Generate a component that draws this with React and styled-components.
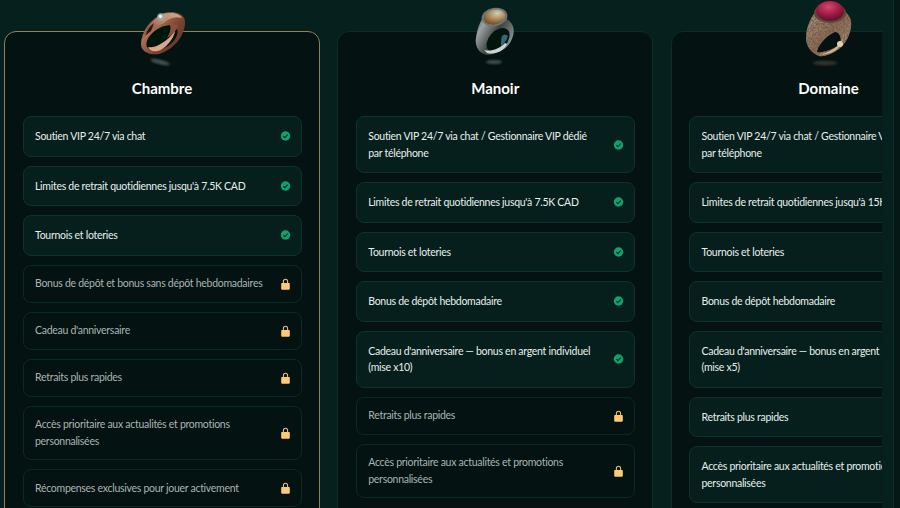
import styled, { createGlobalStyle } from "styled-components";

const GlobalStyle = createGlobalStyle`
	html, body {
		margin: 0;
		height: 100%;
		overflow: hidden;
		background: #06201d;
	}
	#root {
		height: 100%;
	}
`;

const Page = styled.div`
	display: flex;
	width: 900px;
	height: 508px;
	overflow: hidden;
	font-family: "Lato", "Liberation Sans", sans-serif;
`;
const Scroller = styled.div`
	display: flex;
	flex: 0 0 882px;
	gap: 17.25px;
	padding: 31px 0 0 4px;
	box-sizing: border-box;
	overflow: hidden;
`;
const Rail = styled.div`
	flex: 1;
	margin-left: 11px;
	background: #051816;
	border-left: 1px solid #0a2d28;
`;
const Card = styled.section`
	position: relative;
	flex: 0 0 316px;
	box-sizing: border-box;
	height: 560px;
	padding: 0 17.5px;
	background: #041211;
	border: 1px solid ${(p) => (p.$active ? "#8d8258" : "#0c2c27")};
	border-radius: 12px;
`;
const RingArt = styled.svg`
	position: absolute;
	top: -32px;
	left: 50%;
	width: 70px;
	height: 70px;
	margin-left: -35px;
`;
const Title = styled.h2`
	margin: 0;
	padding-top: 46px;
	height: 38px;
	font-size: 15px;
	line-height: 20px;
	font-weight: 700;
	color: #ffffff;
	text-align: center;
`;
const Rows = styled.div`
	display: flex;
	flex-direction: column;
	gap: 9px;
`;
const Row = styled.div`
	display: flex;
	align-items: center;
	justify-content: space-between;
	gap: 12px;
	padding: ${(p) => (p.$locked ? "9.75px" : "11px")} 9.7px
		${(p) => (p.$locked ? "9.75px" : "11px")} 11.5px;
	background: ${(p) => (p.$locked ? "transparent" : "#061f1c")};
	border: 1px solid ${(p) => (p.$locked ? "#0a2a25" : "#0c332d")};
	border-radius: 8px;
`;
const Label = styled.span`
	flex: 1;
	font-size: 10.5px;
	letter-spacing: -0.28px;
	line-height: 16.5px;
	color: ${(p) => (p.$locked ? "#a9b4b1" : "#e6efec")};
`;
const IconBox = styled.svg`
	flex: none;
	width: 11px;
	height: 12px;
`;

const CheckIcon = () => (
	<IconBox viewBox="0 0 11 12">
		<circle cx="5.5" cy="6" r="4.7" fill="#0ea36d" />
		<path d="M3.4 6.1l1.500 1.500 2.800-3" fill="none" stroke="#06231d" strokeWidth="1.2" />
	</IconBox>
);

const LockIcon = () => (
	<IconBox viewBox="0 0 11 12">
		<path d="M3.4 5.5V3.4a2.1 2.1 0 0 1 4.2 0v2.1" fill="none" stroke="#e9bd6c" strokeWidth="1.1" />
		<path d="M2.2 5h6.6c.6 0 1 .4 1 1v4.400c0 .9-.6 1.400-1.400 1.400H2.600c-.8 0-1.400-.5-1.400-1.400V6c0-.6.4-1 1-1z" fill="#fdca72" />
	</IconBox>
);

const CopperRing = () => (
	<RingArt viewBox="127 0 70 70">
		<defs>
			<linearGradient id="copper" x1="0" y1="0.1" x2="1" y2="0.9">
				<stop offset="0" stopColor="#5f3325" />
				<stop offset="0.3" stopColor="#a86f55" />
				<stop offset="0.6" stopColor="#7a4430" />
				<stop offset="1" stopColor="#5d3324" />
			</linearGradient>
			<linearGradient id="copperTop" x1="0" y1="1" x2="1" y2="0">
				<stop offset="0" stopColor="#6b3a2a" />
				<stop offset="0.5" stopColor="#b78268" />
				<stop offset="1" stopColor="#d9a98e" />
			</linearGradient>
			<filter id="soft1"><feGaussianBlur stdDeviation="0.4" /></filter>
			<filter id="soft2"><feGaussianBlur stdDeviation="1.2" /></filter>
		</defs>
		<g filter="url(#soft1)">
			<path d="M141 44c0-12 9-25 23-31 8-2 21-1 21 9 0 13-10 27-26 32-9 1.500-18-2-18-10z" fill="url(#copper)" />
			<path d="M145 36c2-10 9-18 19-22 7-2 15-1 18 4-7-2-13 0-18 5-7 3-14 7-19 13z" fill="url(#copperTop)" />
			<path d="M146 35c1-5 4-9 8-12l-3 8z" fill="#2e1710" />
			<ellipse cx="162" cy="38" rx="17.500" ry="10" transform="rotate(-34 162 38)" fill="#04120f" />
			<path d="M178 26c-2-2-6-3-9-2 3 3 1 9-2 14 5-3 10-8 11-12z" fill="#8a5038" />
			<path d="M148 47c6 2 19-5 27-16-1 8-10 18-17 20-6 1-9-1-10-4z" fill="#d9a78c" />
			<circle cx="161" cy="17" r="3.800" fill="#9aa89c" />
			<circle cx="160.500" cy="16.500" r="1.800" fill="#e6ebe2" />
		</g>
		<ellipse cx="160" cy="62" rx="10" ry="2.500" transform="rotate(14 160 62)" fill="#8b9a92" opacity="0.45" filter="url(#soft2)" />
	</RingArt>
);

const SilverRing = () => (
	<RingArt viewBox="461 0 70 70">
		<defs>
			<linearGradient id="silver" x1="0" y1="0" x2="1" y2="0.6">
				<stop offset="0" stopColor="#3f4645" />
				<stop offset="0.25" stopColor="#9aa2a0" />
				<stop offset="0.6" stopColor="#3c4342" />
				<stop offset="1" stopColor="#8d9492" />
			</linearGradient>
			<radialGradient id="topaz" cx="0.65" cy="0.3" r="0.75">
				<stop offset="0" stopColor="#cfcdb8" />
				<stop offset="0.5" stopColor="#b08c58" />
				<stop offset="1" stopColor="#6d4a2a" />
			</radialGradient>
		</defs>
		<g filter="url(#soft1)">
			<path d="M477 38c1-9 4-17 9-23l22 4c6 4 8 10 6 17-2 8-8 14-15 16-6 3-13 4-16 1-5-3-7-9-6-15z" fill="url(#silver)" />
			<ellipse cx="499" cy="40" rx="9" ry="14" transform="rotate(42 499 40)" fill="#031210" />
			<path d="M503 36c2-2 4-2 6 0-1 4-4 8-7 10 0-4 0-7 1-10z" fill="#33687a" />
			<path d="M485 50c7 2 15-1 21-7l2 1c-3 7-12 11-20 9z" fill="#cdd3d1" />
			<ellipse cx="495.500" cy="17" rx="13" ry="9.200" transform="rotate(-10 495.500 17)" fill="#6f7573" />
			<ellipse cx="495.500" cy="17" rx="10.800" ry="7.400" transform="rotate(-10 495.500 17)" fill="url(#topaz)" />
		</g>
		<ellipse cx="495" cy="62" rx="8" ry="2" fill="#8b9a92" opacity="0.45" filter="url(#soft2)" />
	</RingArt>
);

const RubyRing = () => (
	<RingArt viewBox="794 0 70 70">
		<defs>
			<linearGradient id="bronze" x1="0" y1="0" x2="1" y2="1">
				<stop offset="0" stopColor="#b39a80" />
				<stop offset="0.5" stopColor="#8c6c54" />
				<stop offset="1" stopColor="#b59a7d" />
			</linearGradient>
			<radialGradient id="ruby" cx="0.45" cy="0.3" r="0.7">
				<stop offset="0" stopColor="#d4476e" />
				<stop offset="0.55" stopColor="#a01c47" />
				<stop offset="1" stopColor="#5e0f29" />
			</radialGradient>
			<filter id="grain">
				<feTurbulence type="fractalNoise" baseFrequency="0.55" numOctaves="2" result="n" />
				<feColorMatrix in="n" type="matrix" values="0 0 0 0 0.16 0 0 0 0 0.1 0 0 0 0 0.07 0 0 0 2.6 -0.9" result="d" />
				<feComposite in="d" in2="SourceGraphic" operator="in" result="t" />
				<feMerge><feMergeNode in="SourceGraphic" /><feMergeNode in="t" /></feMerge>
			</filter>
		</defs>
		<path d="M806 38c0-10 5-22 12-29l26 2c6 4 8 10 7 16-1 9-6 17-12 22-7 5-15 8-20 7-8-3-13-10-13-18z" fill="url(#bronze)" filter="url(#grain)" />
		<path d="M817 53c5 3 14-2 22-8 3-5 5-7 5-12-1 7-3 13-8 17-6 4-13 6-19 3z" fill="#cfb592" />
		<path d="M817 52c1-7 9-16 18-20 2 0 3 1 4 2 2 3 2 7 1 10-5 4-15 9-23 8z" fill="#041211" />
		<circle cx="840" cy="44" r="3" fill="#e5cfa8" filter="url(#soft1)" />
		<ellipse cx="830" cy="13" rx="16" ry="10" fill="#5d4738" />
		<ellipse cx="830" cy="11" rx="14" ry="10" fill="url(#ruby)" />
		<ellipse cx="825" cy="63" rx="12" ry="2.500" fill="#6d5a48" opacity="0.45" filter="url(#soft2)" />
	</RingArt>
);

const plans = [
	{
		title: "Chambre",
		active: true,
		Ring: CopperRing,
		rows: [
			["Soutien VIP 24/7 via chat"],
			["Limites de retrait quotidiennes jusqu'à 7.5K CAD"],
			["Tournois et loteries"],
			["Bonus de dépôt et bonus sans dépôt hebdomadaires", true],
			["Cadeau d'anniversaire", true],
			["Retraits plus rapides", true],
			["Accès prioritaire aux actualités et promotions personnalisées", true],
			["Récompenses exclusives pour jouer activement", true],
		],
	},
	{
		title: "Manoir",
		Ring: SilverRing,
		rows: [
			["Soutien VIP 24/7 via chat / Gestionnaire VIP dédié par téléphone"],
			["Limites de retrait quotidiennes jusqu'à 7.5K CAD"],
			["Tournois et loteries"],
			["Bonus de dépôt hebdomadaire"],
			["Cadeau d'anniversaire — bonus en argent individuel (mise x10)"],
			["Retraits plus rapides", true],
			["Accès prioritaire aux actualités et promotions personnalisées", true],
		],
	},
	{
		title: "Domaine",
		Ring: RubyRing,
		rows: [
			["Soutien VIP 24/7 via chat / Gestionnaire VIP dédié par téléphone"],
			["Limites de retrait quotidiennes jusqu'à 15K CAD"],
			["Tournois et loteries"],
			["Bonus de dépôt hebdomadaire"],
			["Cadeau d'anniversaire — bonus en argent individuel (mise x5)"],
			["Retraits plus rapides"],
			["Accès prioritaire aux actualités et promotions personnalisées"],
		],
	},
];

const App = () => {
	return (
		<Page>
			<GlobalStyle />
			<Scroller>
				{plans.map(({ title, active, Ring, rows }) => (
					<Card key={title} $active={active}>
						<Ring />
						<Title>{title}</Title>
						<Rows>
							{rows.map(([text, locked]) => (
								<Row key={text} $locked={locked}>
									<Label $locked={locked}>{text}</Label>
									{locked ? <LockIcon /> : <CheckIcon />}
								</Row>
							))}
						</Rows>
					</Card>
				))}
			</Scroller>
			<Rail />
		</Page>
	);
};

export default App;
